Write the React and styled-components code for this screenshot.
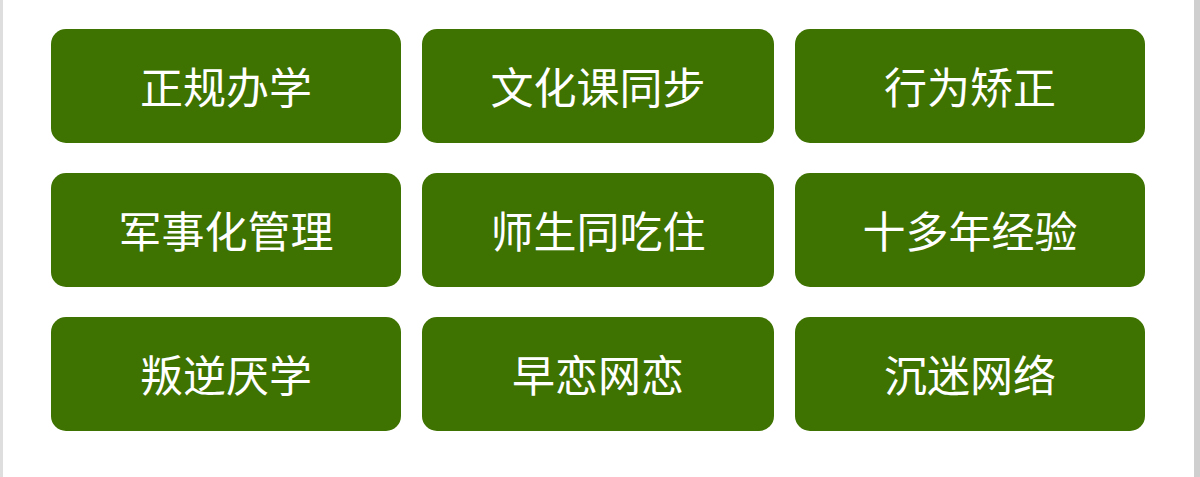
import React from "react";
import styled, { createGlobalStyle } from "styled-components";

const Global = createGlobalStyle`
  html, body { margin: 0; padding: 0; background: #ffffff; }
  body { font-family: "Microsoft YaHei", "Noto Sans CJK SC", "Noto Sans", sans-serif; }
`;

const Frame = styled.div`
  box-sizing: border-box;
  width: 1200px;
  height: 477px;
  border-left: 3px solid #dedede;
  border-right: 6px solid #cfcfcf;
  background: #ffffff;
  padding: 29px 0 0 48px;
`;

const Grid = styled.div`
  display: grid;
  grid-template-columns: 350px 352px 350px;
  grid-auto-rows: 114px;
  column-gap: 21px;
  row-gap: 30px;
`;

const Tag = styled.a`
  display: flex;
  align-items: center;
  justify-content: center;
  background: #3e7201;
  color: #ffffff;
  border-radius: 15px;
  font-size: 43px;
  font-weight: 400;
  text-decoration: none;
  padding-bottom: 2px;
  box-sizing: border-box;
  cursor: pointer;
`;

const items = [
  "正规办学",
  "文化课同步",
  "行为矫正",
  "军事化管理",
  "师生同吃住",
  "十多年经验",
  "叛逆厌学",
  "早恋网恋",
  "沉迷网络",
];

export default function App() {
  return (
    <>
      <Global />
      <Frame>
        <Grid>
          {items.map((t) => (
            <Tag key={t}>{t}</Tag>
          ))}
        </Grid>
      </Frame>
    </>
  );
}
